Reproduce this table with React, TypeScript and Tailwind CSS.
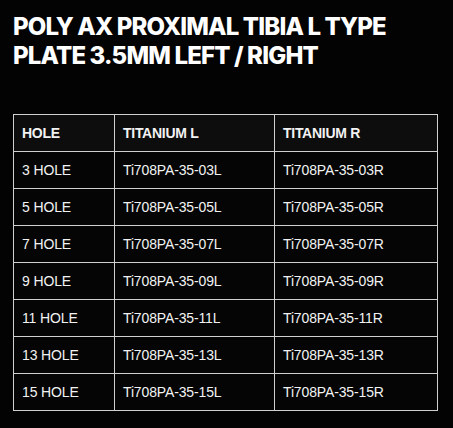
const rows = [3, 5, 7, 9, 11, 13, 15]

export default function App() {
  return (
    <div className="min-h-[428px] w-[453px] bg-[#030303] px-[13px] pt-[12px] pb-4">
      <h1 className="font-['Inter',sans-serif] text-[24px] leading-[29px] font-extrabold tracking-[-0.035em] text-white">
        POLY AX PROXIMAL TIBIA L TYPE
        <br />
        PLATE 3.5MM LEFT / RIGHT
      </h1>
      <table className="mt-[44px] w-[425px] border-collapse font-['Liberation_Sans',Arial,sans-serif] text-[14px] text-[#f2f2f2]">
        <thead>
          <tr className="h-[37px] bg-[#0d0d0d]">
            <th className="w-[101px] border border-[#d0d0d0] px-2 text-left font-bold tracking-[-0.02em]">HOLE</th>
            <th className="w-[160px] border border-[#d0d0d0] px-2 text-left font-bold tracking-[-0.02em]">TITANIUM L</th>
            <th className="border border-[#d0d0d0] px-2 text-left font-bold tracking-[-0.02em]">TITANIUM R</th>
          </tr>
        </thead>
        <tbody>
          {rows.map((n) => {
            const code = String(n).padStart(2, '0')
            return (
              <tr key={n} className="h-[37px] bg-[#050505]">
                <td className="border border-[#d0d0d0] px-2 tracking-[-0.01em]">{n} HOLE</td>
                <td className="border border-[#d0d0d0] px-2 tracking-[-0.01em]">Ti708PA-35-{code}L</td>
                <td className="border border-[#d0d0d0] px-2 tracking-[-0.01em]">Ti708PA-35-{code}R</td>
              </tr>
            )
          })}
        </tbody>
      </table>
    </div>
  )
}
